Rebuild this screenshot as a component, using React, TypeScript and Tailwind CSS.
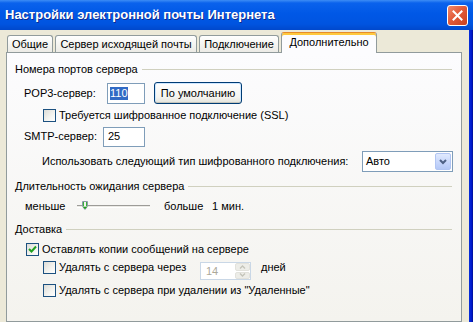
import React from 'react';

const Checkbox: React.FC<{ checked?: boolean }> = ({ checked }) => (
  <span className="relative w-[13px] h-[13px] shrink-0 border border-[#1C5180] bg-[linear-gradient(135deg,#DCDCD7_0%,#F4F4F0_60%,#FFFFFF_100%)]">
    {checked && (
      <svg className="absolute left-[1px] top-[1px]" width="9" height="9" viewBox="0 0 9 9">
        <path d="M1 4 L3.5 6.5 L8 1.5" fill="none" stroke="#21A121" strokeWidth="2" />
      </svg>
    )}
  </span>
);

const GroupTitle: React.FC<{ label: string; className?: string }> = ({ label, className }) => (
  <div className={`flex items-center h-[14px] ${className ?? ''}`}>
    <span className="whitespace-nowrap leading-[14px]">{label}</span>
    <div className="flex-1 ml-[4px] h-[1px] bg-[#D0D0BF]"></div>
  </div>
);

const tabs = [
  { label: 'Общие', w: 'w-[46px]' },
  { label: 'Сервер исходящей почты', w: 'w-[142px]' },
  { label: 'Подключение', w: 'w-[80px]' },
];

export default function App() {
  return (
    <div className="w-[473px] h-[322px] overflow-hidden flex flex-col font-['Liberation_Sans',Arial,sans-serif] text-[11px] text-black select-none">
      {/* title bar */}
      <div className="h-[30px] shrink-0 flex items-center pl-[5px] pr-[5px] bg-[linear-gradient(to_bottom,#3D8DF5_0%,#0A62EC_10%,#0058E6_45%,#0054E0_80%,#0048CC_100%)]">
        <span className="flex-1 text-white font-bold text-[13px] leading-[16px] [text-shadow:1px_1px_0_#0F2B8F] whitespace-nowrap">
          Настройки электронной почты Интернета
        </span>
        <div className="w-[21px] h-[21px] mr-[0px] rounded-[3px] border border-white bg-[linear-gradient(135deg,#F08A6C_0%,#E25B3A_45%,#C8401E_100%)] flex items-center justify-center">
          <svg width="11" height="11" viewBox="0 0 11 11">
            <path d="M1.5 1.5 L9.5 9.5 M9.5 1.5 L1.5 9.5" stroke="white" strokeWidth="2" strokeLinecap="square" />
          </svg>
        </div>
      </div>

      <div className="flex-1 flex min-h-0">
        <div className="flex-1 flex flex-col bg-[#ECE9D8] min-h-0">
          {/* tabs */}
          <div className="h-[22px] shrink-0 flex items-end pl-[7px] gap-[2px]">
            {tabs.map(t => (
              <div
                key={t.label}
                className={`${t.w} h-[17px] flex items-center justify-center border border-b-0 border-[#919B9C] rounded-t-[3px] bg-[linear-gradient(to_bottom,#FFFFFF_0%,#F3F3EF_60%,#ECEBE6_100%)] whitespace-nowrap leading-[13px]`}
              >
                {t.label}
              </div>
            ))}
            <div className="relative z-10 w-[96px] h-[21px] -mb-[1px] flex items-center justify-center pb-[2px] border border-b-0 border-[#919B9C] border-t-[#E68B2C] rounded-t-[3px] bg-[#FCFCFE] shadow-[inset_0_2px_0_#FFC83C] whitespace-nowrap leading-[13px]">
              Дополнительно
            </div>
          </div>

          {/* panel */}
          <div className="ml-[6px] w-[456px] flex-1 border border-[#919B9C] bg-[linear-gradient(to_bottom,#FCFCFE_0%,#F4F3EE_100%)] pl-[8px] pr-[9px] flex flex-col">
            <GroupTitle label="Номера портов сервера" className="mt-[9px]" />

            <div className="mt-[6px] h-[22px] flex items-center pl-[9px]">
              <span className="w-[83px] leading-[13px]">POP3-сервер:</span>
              <div className="w-[38px] h-[21px] border border-[#7F9DB9] bg-white flex items-center pl-[2px]">
                <span className="bg-[#316AC5] text-white leading-[13px] px-[0px]">110</span>
              </div>
              <div className="ml-[9px] w-[88px] h-[22px] rounded-[3px] border border-[#003C74] bg-[linear-gradient(to_bottom,#FFFFFF_0%,#F4F4F0_70%,#E3E3DB_100%)] shadow-[inset_0_-1px_0_#C5C5BC,inset_0_0_0_1px_#CEE7FF] flex items-center justify-center leading-[13px]">
                По умолчанию
              </div>
            </div>

            <div className="mt-[5px] h-[13px] flex items-center pl-[28px]">
              <Checkbox />
              <span className="ml-[3px] leading-[13px] whitespace-nowrap">Требуется шифрованное подключение (SSL)</span>
            </div>

            <div className="mt-[4px] h-[21px] flex items-center pl-[9px]">
              <span className="w-[79px] leading-[13px]">SMTP-сервер:</span>
              <div className="w-[42px] h-[20px] border border-[#7F9DB9] bg-white flex items-center pl-[4px] leading-[13px]">
                25
              </div>
            </div>

            <div className="mt-[4px] h-[21px] flex items-center pl-[27px]">
              <span className="leading-[13px] whitespace-nowrap">Использовать следующий тип шифрованного подключения:</span>
              <div className="ml-auto -mr-[1px] w-[91px] h-[21px] border border-[#7F9DB9] bg-white flex items-center">
                <span className="flex-1 pl-[3px] leading-[13px]">Авто</span>
                <div className="w-[16px] h-[17px] mr-[1px] rounded-[2px] border border-[#B1C5F3] bg-[linear-gradient(to_bottom,#E1EAFE_0%,#C5D5FB_60%,#B4C8F6_100%)] flex items-center justify-center">
                  <svg width="8" height="6" viewBox="0 0 8 6">
                    <path d="M1 1 L4 4 L7 1" fill="none" stroke="#4D6185" strokeWidth="2" />
                  </svg>
                </div>
              </div>
            </div>

            <GroupTitle label="Длительность ожидания сервера" className="mt-[7px]" />

            <div className="mt-[6px] h-[14px] flex items-center pl-[10px]">
              <span className="w-[52px] leading-[13px]">меньше</span>
              <div className="relative w-[73px] h-[14px] flex items-center">
                <div className="w-full h-[3px] border-t border-[#9D9C99] border-b border-b-white bg-[#ECEBE6]"></div>
                <svg className="absolute left-[5px] top-[2px]" width="6" height="9" viewBox="0 0 6 9">
                  <path d="M0.5 0.5 H5.5 V5.5 L3 8.5 L0.5 5.5 Z" fill="#F4F4F0" stroke="#8A9AA8" strokeWidth="1" />
                  <path d="M1.5 5.5 L3 7.3 L4.5 5.5" fill="none" stroke="#21A121" strokeWidth="1.2" />
                  <path d="M1.5 1 V5 M4.5 1 V5" stroke="#39B239" strokeWidth="1" />
                </svg>
              </div>
              <span className="ml-[14px] w-[48px] leading-[13px]">больше</span>
              <span className="leading-[13px]">1 мин.</span>
            </div>

            <GroupTitle label="Доставка" className="mt-[9px]" />

            <div className="mt-[7px] h-[13px] flex items-center pl-[11px]">
              <Checkbox checked />
              <span className="ml-[3px] leading-[13px] whitespace-nowrap">Оставлять копии сообщений на сервере</span>
            </div>

            <div className="mt-[5px] h-[19px] flex items-start pl-[28px]">
              <Checkbox />
              <span className="ml-[3px] w-[141px] leading-[13px] whitespace-nowrap">Удалять с сервера через</span>
              <div className="mt-[1px] w-[51px] h-[18px] border border-[#C9D7E6] bg-white flex items-center">
                <span className="flex-1 pl-[5px] text-[#ACA899] leading-[13px]">14</span>
                <div className="w-[15px] h-[16px] mr-[0px] flex flex-col gap-[1px] bg-white">
                  <div className="flex-1 rounded-[2px] bg-[#EDEDE8] border border-[#E2E2DC] flex items-center justify-center">
                    <svg width="7" height="4" viewBox="0 0 7 4"><path d="M1 3.5 L3.5 1 L6 3.5" fill="none" stroke="#C4C4BA" strokeWidth="1.4" /></svg>
                  </div>
                  <div className="flex-1 rounded-[2px] bg-[#EDEDE8] border border-[#E2E2DC] flex items-center justify-center">
                    <svg width="7" height="4" viewBox="0 0 7 4"><path d="M1 0.5 L3.5 3 L6 0.5" fill="none" stroke="#C4C4BA" strokeWidth="1.4" /></svg>
                  </div>
                </div>
              </div>
              <span className="ml-[10px] leading-[13px]">дней</span>
            </div>

            <div className="mt-[4px] h-[13px] flex items-center pl-[28px]">
              <Checkbox />
              <span className="ml-[3px] leading-[13px] whitespace-nowrap">Удалять с сервера при удалении из "Удаленные"</span>
            </div>
          </div>
        </div>
        <div className="w-[4px] shrink-0 bg-[linear-gradient(to_right,#0831D9_0%,#0019CF_60%,#001090_100%)]"></div>
      </div>
    </div>
  );
}
